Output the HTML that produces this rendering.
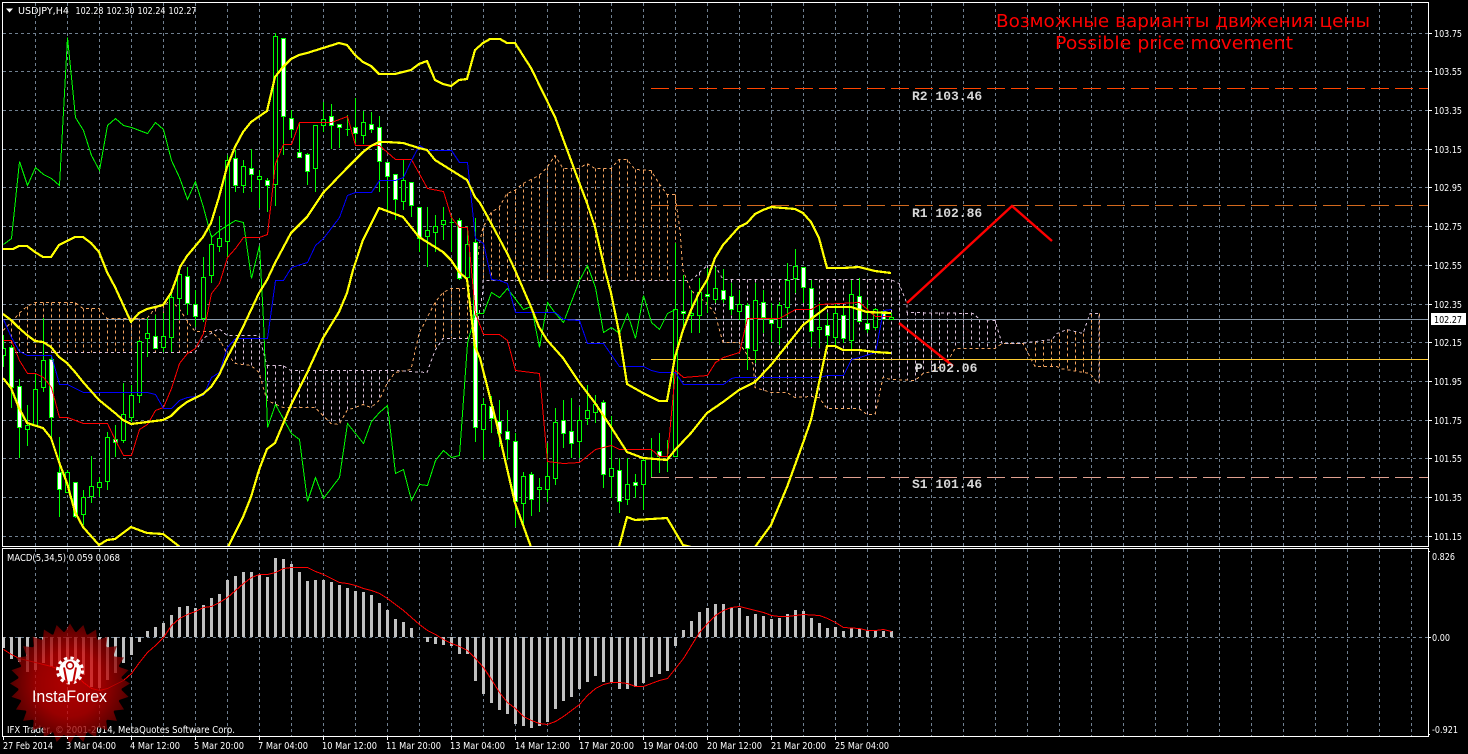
<!DOCTYPE html>
<html>
<head>
<meta charset="utf-8">
<title>USDJPY,H4</title>
<style>
html,body{margin:0;padding:0;background:#000;width:1468px;height:754px;overflow:hidden}
svg{display:block}
.t{font-family:"DejaVu Sans","Liberation Sans",sans-serif;font-size:9.8px;fill:#fff}
.m{font-family:"Liberation Mono",monospace;font-size:13px;font-weight:bold;fill:#d8d8d8}
.l{fill:none;shape-rendering:crispEdges}
</style>
</head>
<body>
<svg xmlns="http://www.w3.org/2000/svg" width="1468" height="754" viewBox="0 0 1468 754">
<defs>
<clipPath id="mc"><rect x="3" y="3" width="1425" height="543"/></clipPath>
<clipPath id="sc"><rect x="3" y="549" width="1425" height="187"/></clipPath>
<radialGradient id="rg" gradientUnits="userSpaceOnUse" cx="0" cy="0" r="60"><stop offset="0" stop-color="#e80000"/><stop offset=".55" stop-color="#c80000"/><stop offset="1" stop-color="#700000"/></radialGradient>
</defs>
<rect width="1468" height="754" fill="#000"/>

<!-- grid -->
<path class="l" stroke="#708090" stroke-dasharray="3 3" d="M35.5 3V736M67.5 3V736M99.5 3V736M131.5 3V736M163.5 3V736M195.5 3V736M227.5 3V736M259.5 3V736M291.5 3V736M323.5 3V736M355.5 3V736M387.5 3V736M419.5 3V736M451.5 3V736M483.5 3V736M515.5 3V736M547.5 3V736M579.5 3V736M611.5 3V736M643.5 3V736M675.5 3V736M707.5 3V736M739.5 3V736M771.5 3V736M803.5 3V736M835.5 3V736M867.5 3V736M899.5 3V736M931.5 3V736M963.5 3V736M995.5 3V736M1027.5 3V736M1059.5 3V736M1091.5 3V736M1123.5 3V736M1155.5 3V736M1187.5 3V736M1219.5 3V736M1251.5 3V736M1283.5 3V736M1315.5 3V736M1347.5 3V736M1379.5 3V736M1411.5 3V736"/>
<path class="l" stroke="#708090" stroke-dasharray="3 3" d="M3 33.5H1428M3 71.5H1428M3 110.5H1428M3 149.5H1428M3 187.5H1428M3 226.5H1428M3 265.5H1428M3 304.5H1428M3 342.5H1428M3 381.5H1428M3 420.5H1428M3 458.5H1428M3 497.5H1428M3 536.5H1428M3 637.5H1428"/>

<g clip-path="url(#mc)">
<!-- cloud hatching -->
<g transform="translate(0,.5)" class="l" stroke-dasharray="3 3">
<path stroke="#f4a460" d="M11.5 322V352M19.5 313V352M27.5 306V352M35.5 302V352M43.5 302V352M51.5 302V352M59.5 302V352M67.5 302V352M75.5 302V352M83.5 308V352M91.5 308V352M99.5 308V352M107.5 318V352M115.5 318V352M123.5 318V352M131.5 318V352M139.5 318V352M147.5 318V352M155.5 308V352M163.5 305V352M171.5 300V352M179.5 308V352M187.5 320V352M435.5 302V350M443.5 292V338M451.5 288V338M459.5 288V338M467.5 288V338M475.5 280V338M483.5 227V280M491.5 212V280M499.5 207V280M507.5 193V280M515.5 190V280M523.5 183V280M531.5 179V280M539.5 175V280M547.5 167V280M555.5 155V280M563.5 168V280M571.5 168V280M579.5 168V280M587.5 163V280M595.5 168V280M603.5 168V280M611.5 168V280M619.5 159V280M627.5 159V280M635.5 169V280M643.5 170V280M651.5 170V280M659.5 183V280M667.5 194V280M675.5 194V280M1035.5 341V366M1043.5 340V366M1051.5 339V366M1059.5 333V368M1067.5 329V370M1075.5 331V371M1083.5 333V373M1091.5 313V373M1099.5 313V383"/>
<path stroke="#d8bfd8" d="M235.5 338V363M243.5 338V364M251.5 338V365M259.5 338V372M267.5 365V400M275.5 365V405M283.5 365V407M291.5 370V407M299.5 370V407M307.5 370V407M315.5 370V407M323.5 370V415M331.5 370V423M339.5 370V424M347.5 370V410M355.5 370V407M363.5 370V404M371.5 370V407M379.5 370V400M387.5 370V383M699.5 272V300M707.5 265V303M715.5 265V313M723.5 279V342M731.5 279V342M739.5 279V342M747.5 279V360M755.5 279V387M763.5 279V390M771.5 279V392M779.5 279V392M787.5 279V392M795.5 279V397M803.5 279V396M811.5 279V396M819.5 279V397M827.5 279V408M835.5 279V408M843.5 279V408M851.5 279V408M859.5 279V408M867.5 279V414M875.5 279V414M883.5 279V377M891.5 279V380M899.5 283V380M907.5 312V380M915.5 312V380M923.5 312V373M931.5 312V371M939.5 312V366M947.5 312V362M955.5 312V348M963.5 312V348M971.5 312V348M979.5 319V348M987.5 319V348M995.5 320V348"/>
<polyline fill="none" stroke="#f4a460" stroke-dasharray="3 3" points="3,330 11,322 19,313 27,306 35,302 75,302 83,308 99,308 107,318 147,318 155,308 163,305 171,300 179,308 187,320 195,331 211,331 219,338 227,353 235,363 251,365 259,372 267,400 283,407 315,407 323,415 331,423 339,424 347,410 355,407 363,404 371,407 379,400 387,383 395,372 411,369 419,333 435,302 443,292 451,288 467,288 475,280 480,240 483,227 491,212 499,207 507,193 515,190 523,183 531,179 539,175 547,167 555,155 563,168 579,168 587,163 595,168 611,168 619,159 627,159 635,169 651,170 659,183 667,194 675,194 680,230 683,270 691,290 707,303 715,313 723,342 739,342 753,363 755,387 771,392 787,392 795,397 811,396 819,397 827,408 859,408 867,414 875,414 883,377 891,379 915,380 923,373 932,371 947,362 955,348 995,348 1002,343 1023,343 1035,366 1057,366 1060,368 1090,373 1098,383"/>
<polyline fill="none" stroke="#d8bfd8" stroke-dasharray="3 3" points="3,352 195,352 203,338 219,328 227,335 259,335 267,365 283,365 291,370 395,370 427,372 435,350 443,338 475,338 483,290 483,280 675,280 691,280 707,265 715,265 723,279 891,279 899,283 907,303 907,312 973,313 980,319 995,320 1002,343 1023,343 1027,342 1052,339 1057,333 1067,329 1083,333 1090,313 1099,313 1099,383"/>
</g>

<!-- price levels -->
<path class="l" stroke="#ff4500" stroke-dasharray="18 6" d="M651 88.5H1428"/>
<path class="l" stroke="#d2691e" stroke-dasharray="18 6" d="M651 205.5H1428"/>
<path class="l" stroke="#e0a090" stroke-dasharray="18 6" d="M651 477.5H1428"/>
<path class="l" stroke="#ffcc33" d="M651 359.5H1428"/>
<path class="l" stroke="#8a9aaa" d="M3 319.5H1428"/>

<!-- candles -->
<path class="l" stroke="#00ff00" d="M3.5 335V367M11.5 345V408M19.5 379V458M27.5 405V446M35.5 373V427M43.5 318V392M51.5 356V437M59.5 437V517M67.5 470V492M75.5 482V518M83.5 490V525M91.5 456V503M99.5 477V497M107.5 432V490M115.5 425V457M123.5 383V443M131.5 385V422M139.5 340V403M147.5 318V357M155.5 315V349M163.5 313V352M171.5 293V352M179.5 267V320M187.5 267V315M195.5 290V327M203.5 257V322M211.5 235V283M219.5 216V252M227.5 155V257M235.5 150V192M243.5 160V193M251.5 149V192M259.5 170V208M267.5 178V212M275.5 33V206M283.5 38V155M291.5 110V138M299.5 123V157M307.5 153V185M315.5 125V192M323.5 102V132M331.5 104V149M339.5 125V148M347.5 115V136M355.5 98V143M363.5 111V144M371.5 112V133M379.5 116V192M387.5 162V210M395.5 174V220M403.5 160V210M411.5 182V217M419.5 207V252M427.5 207V267M435.5 215V252M443.5 207V240M451.5 215V252M459.5 218V280M467.5 226V290M475.5 218V442M483.5 398V460M491.5 396V433M499.5 400V447M507.5 410V460M515.5 433V527M523.5 472V527M531.5 472V516M539.5 478V512M547.5 443V502M555.5 408V485M563.5 400V448M571.5 398V458M579.5 407V458M587.5 385V425M595.5 395V423M603.5 400V488M611.5 416V498M619.5 458V513M627.5 458V505M635.5 474V498M643.5 458V510M651.5 438V477M659.5 433V473M667.5 440V472M675.5 243V457M683.5 275V327M691.5 290V333M699.5 278V333M707.5 268V313M715.5 267V303M723.5 269V303M731.5 283V315M739.5 290V320M747.5 303V370M755.5 283V363M763.5 290V333M771.5 303V342M779.5 302V345M787.5 263V317M795.5 249V293M803.5 267V303M811.5 280V347M819.5 302V348M827.5 313V347M835.5 303V345M843.5 308V343M851.5 280V350M859.5 278V323M867.5 300V333M875.5 308V330M883.5 310V320M891.5 313V320M345.5 129.5H350M449.5 222.5H454M649.5 458.5H654M665.5 456.5H670"/>
<path shape-rendering="crispEdges" stroke="#00ff00" fill="#000" d="M1.5 348.5h4V355.5h-4zM25.5 425.5h4V429.5h-4zM33.5 389.5h4V425.5h-4zM41.5 360.5h4V387.5h-4zM65.5 472.5h4V492.5h-4zM81.5 497.5h4V514.5h-4zM89.5 486.5h4V496.5h-4zM97.5 482.5h4V487.5h-4zM105.5 437.5h4V481.5h-4zM121.5 414.5h4V440.5h-4zM129.5 395.5h4V417.5h-4zM137.5 341.5h4V395.5h-4zM145.5 333.5h4V338.5h-4zM161.5 336.5h4V347.5h-4zM169.5 297.5h4V337.5h-4zM177.5 274.5h4V298.5h-4zM201.5 277.5h4V318.5h-4zM209.5 244.5h4V275.5h-4zM217.5 238.5h4V246.5h-4zM225.5 160.5h4V241.5h-4zM241.5 166.5h4V185.5h-4zM257.5 176.5h4V179.5h-4zM273.5 36.5h4V184.5h-4zM313.5 125.5h4V168.5h-4zM321.5 119.5h4V125.5h-4zM361.5 122.5h4V135.5h-4zM401.5 180.5h4V201.5h-4zM425.5 230.5h4V236.5h-4zM433.5 226.5h4V232.5h-4zM441.5 220.5h4V224.5h-4zM465.5 244.5h4V277.5h-4zM481.5 404.5h4V429.5h-4zM521.5 476.5h4V503.5h-4zM537.5 487.5h4V489.5h-4zM545.5 476.5h4V489.5h-4zM553.5 422.5h4V478.5h-4zM577.5 420.5h4V441.5h-4zM585.5 410.5h4V418.5h-4zM593.5 404.5h4V412.5h-4zM609.5 468.5h4V476.5h-4zM625.5 484.5h4V499.5h-4zM641.5 460.5h4V484.5h-4zM673.5 309.5h4V456.5h-4zM689.5 313.5h4V315.5h-4zM697.5 292.5h4V315.5h-4zM713.5 288.5h4V299.5h-4zM737.5 304.5h4V311.5h-4zM753.5 300.5h4V350.5h-4zM777.5 305.5h4V327.5h-4zM785.5 280.5h4V307.5h-4zM793.5 266.5h4V278.5h-4zM817.5 327.5h4V329.5h-4zM833.5 313.5h4V337.5h-4zM849.5 294.5h4V340.5h-4zM873.5 309.5h4V327.5h-4zM889.5 317.5h4V319.5h-4z"/>
<path shape-rendering="crispEdges" stroke="#00ff00" fill="#fff" d="M9.5 347.5h4V387.5h-4zM17.5 386.5h4V427.5h-4zM49.5 359.5h4V417.5h-4zM57.5 472.5h4V489.5h-4zM73.5 482.5h4V516.5h-4zM113.5 439.5h4V442.5h-4zM153.5 336.5h4V348.5h-4zM185.5 276.5h4V303.5h-4zM193.5 304.5h4V316.5h-4zM233.5 158.5h4V185.5h-4zM249.5 168.5h4V174.5h-4zM265.5 180.5h4V185.5h-4zM281.5 38.5h4V116.5h-4zM289.5 118.5h4V129.5h-4zM297.5 152.5h4V157.5h-4zM305.5 154.5h4V171.5h-4zM329.5 116.5h4V125.5h-4zM337.5 124.5h4V127.5h-4zM353.5 127.5h4V133.5h-4zM369.5 124.5h4V129.5h-4zM377.5 127.5h4V161.5h-4zM385.5 162.5h4V176.5h-4zM393.5 174.5h4V199.5h-4zM409.5 182.5h4V205.5h-4zM417.5 207.5h4V238.5h-4zM457.5 220.5h4V278.5h-4zM473.5 242.5h4V427.5h-4zM489.5 406.5h4V418.5h-4zM497.5 421.5h4V433.5h-4zM505.5 431.5h4V439.5h-4zM513.5 441.5h4V501.5h-4zM529.5 474.5h4V499.5h-4zM561.5 420.5h4V433.5h-4zM569.5 431.5h4V443.5h-4zM601.5 402.5h4V474.5h-4zM617.5 470.5h4V501.5h-4zM633.5 482.5h4V485.5h-4zM657.5 451.5h4V456.5h-4zM681.5 311.5h4V313.5h-4zM705.5 294.5h4V296.5h-4zM721.5 290.5h4V299.5h-4zM729.5 296.5h4V309.5h-4zM745.5 305.5h4V348.5h-4zM761.5 302.5h4V317.5h-4zM769.5 319.5h4V323.5h-4zM801.5 267.5h4V287.5h-4zM809.5 288.5h4V331.5h-4zM825.5 325.5h4V335.5h-4zM841.5 315.5h4V338.5h-4zM857.5 296.5h4V321.5h-4zM865.5 323.5h4V329.5h-4zM881.5 311.5h4V319.5h-4z"/>

<!-- ichimoku lines -->
<g transform="translate(.5,.5)" fill="none" shape-rendering="crispEdges">
<polyline stroke="#00ff00" points="3,244 11,238 19,161 27,185 35,167 43,174 51,178 59,185 67,37 75,117 83,130 91,155 99,170 107,125 115,118 123,125 131,127 147,133 155,122 163,129 171,160 179,177 187,199 195,181 203,207 211,237 219,230 235,220 243,222 251,278 259,245 263,320 267,427 275,404 291,433 299,439 307,501 315,477 323,498 339,477 347,423 363,443 371,421 379,412 387,405 395,473 403,469 411,500 419,484 427,485 435,460 443,450 451,457 459,455 467,343 475,313 483,313 491,292 499,297 507,288 523,309 531,306 539,347 547,302 555,313 563,322 579,280 587,265 595,287 603,332 611,327 619,333 627,313 635,338 643,295 651,322 659,329 667,313 675,309"/>
<polyline stroke="#ff0000" points="3,340 11,340 19,360 27,373 35,373 43,377 51,387 59,417 67,417 83,423 107,423 115,440 123,455 131,455 139,429 147,424 155,410 163,407 171,388 179,363 187,353 195,348 203,333 211,293 219,283 227,257 235,248 243,237 259,237 267,234 272,190 275,163 283,144 291,144 299,122 331,122 347,116 355,145 379,145 395,159 411,159 427,188 443,191 451,217 459,227 467,227 471,270 475,313 483,334 499,334 507,340 515,370 539,373 547,461 563,463 579,462 595,449 611,445 619,449 651,449 659,456 667,456 675,370 683,377 707,375 715,362 723,357 739,352 747,318 779,318 795,309 811,309 819,304 859,302 875,316 891,316"/>
<polyline stroke="#0000ff" points="3,319 11,337 19,351 27,355 51,355 59,384 67,384 83,392 147,392 155,394 163,408 171,408 179,400 187,397 203,395 211,377 219,372 227,347 235,338 267,338 275,280 283,280 291,267 307,262 315,245 323,238 339,217 347,195 355,192 371,192 379,180 395,180 403,177 411,160 419,145 427,150 451,150 459,162 467,162 475,238 483,243 491,279 499,280 507,283 515,312 555,312 563,319 579,320 587,343 603,343 619,366 643,366 651,370 659,372 675,372 683,384 723,384 731,378 735,377 819,377 827,375 843,375 851,359 859,357 875,352 883,310 891,309"/>
</g>

<!-- bollinger -->
<g fill="none" stroke="#ffff00" stroke-width="2.2" stroke-linejoin="round" shape-rendering="crispEdges">
<polyline points="3,249 13,249 19,246 27,246 35,252 43,257 51,257 59,245 67,241 75,237 83,237 91,243 99,252 107,272 115,287 131,322 139,313 147,309 163,305 171,293 177,277 180,267 187,256 203,237 211,223 219,197 227,167 235,147 243,132 251,122 267,111 275,77 283,67 291,59 299,55 307,53 323,48 339,43 347,45 355,55 363,62 371,66 379,74 395,74 411,70 419,64 427,61 435,80 443,84 451,86 459,80 467,79 475,50 483,43 490,39 500,39 507,43 515,43 531,68 555,117 579,182 587,203 595,227 605,270 611,293 619,332 627,384 643,393 659,401 667,401 675,357 683,330 691,310 699,293 707,280 715,258 723,245 739,227 747,223 755,214 763,210 771,207 795,209 803,213 811,222 819,238 827,268 843,268 859,267 875,271 891,273"/>
<polyline points="3,314 11,320 19,328 27,335 35,341 43,342 51,347 59,357 67,363 75,372 83,382 99,400 115,413 123,420 131,424 139,423 147,422 163,420 171,416 179,408 187,402 195,398 203,394 211,387 219,375 227,358 235,343 243,327 251,310 259,293 267,280 275,263 283,248 291,233 307,217 323,193 347,168 363,152 371,146 379,142 387,142 403,143 419,148 427,150 435,160 451,170 467,180 475,197 480,203 491,223 499,238 507,253 515,270 531,307 539,327 547,340 563,358 579,382 595,403 611,427 627,452 643,458 667,460 675,450 691,433 707,413 723,402 739,390 755,382 771,365 787,345 803,325 819,313 827,307 851,307 867,312 891,313"/>
<polyline points="3,378 11,388 19,408 27,423 43,428 51,438 59,462 67,483 75,512 83,527 99,545 107,540 115,539 131,527 147,533 163,534 171,540 180,547"/>
<polyline points="228,547 243,517 251,497 259,470 267,449 275,443 291,405 307,373 323,338 339,312 347,293 353,270 363,240 379,208 403,217 419,237 427,242 443,252 451,260 459,272 467,279 475,347 480,358 497,425 515,503 531,547"/>
<polyline points="619,547 627,517 635,520 667,518 683,545 691,547"/>
<polyline points="755,547 771,525 787,487 803,443 811,420 819,383 827,346 835,346 843,350 859,350 875,352 891,353"/>
</g>

<!-- forecast arrows -->
<polyline fill="none" stroke="#ff0000" stroke-width="2.4" points="907,303 1012,206 1052,241"/>
<line x1="899" y1="323" x2="953" y2="366" stroke="#ff0000" stroke-width="2.4"/>
</g>

<!-- macd -->
<g clip-path="url(#sc)">
<path class="l" stroke="#c0c0c0" stroke-width="3" d="M3.5 637V648M11.5 637V659M19.5 637V662M27.5 637V672M35.5 637V670M43.5 637V663M51.5 637V667M59.5 637V664M67.5 637V683M75.5 637V683M83.5 637V675M91.5 637V687M99.5 637V688M107.5 637V680M115.5 637V673M123.5 637V663M131.5 637V655M139.5 637V642M147.5 637V631M155.5 637V627M163.5 637V623M171.5 637V615M179.5 637V607M187.5 637V606M195.5 637V608M203.5 637V605M211.5 637V598M219.5 637V594M227.5 637V580M235.5 637V576M243.5 637V572M251.5 637V572M259.5 637V575M267.5 637V577M275.5 637V558M283.5 637V559M291.5 637V564M299.5 637V572M307.5 637V581M315.5 637V580M323.5 637V580M331.5 637V582M339.5 637V585M347.5 637V588M355.5 637V591M363.5 637V592M371.5 637V595M379.5 637V603M387.5 637V610M395.5 637V619M403.5 637V622M411.5 637V628M427.5 637V642M435.5 637V644M443.5 637V645M451.5 637V646M459.5 637V654M467.5 637V654M475.5 637V681M483.5 637V694M491.5 637V703M499.5 637V710M507.5 637V714M515.5 637V724M523.5 637V726M531.5 637V728M539.5 637V726M547.5 637V722M555.5 637V709M563.5 637V701M571.5 637V697M579.5 637V689M587.5 637V682M595.5 637V676M603.5 637V682M611.5 637V682M619.5 637V689M627.5 637V689M635.5 637V687M643.5 637V683M651.5 637V677M659.5 637V674M667.5 637V671M675.5 637V646M683.5 637V630M691.5 637V621M699.5 637V612M707.5 637V608M715.5 637V604M723.5 637V604M731.5 637V608M739.5 637V608M747.5 637V616M755.5 637V614M763.5 637V616M771.5 637V619M779.5 637V618M787.5 637V614M795.5 637V610M803.5 637V611M811.5 637V618M819.5 637V623M827.5 637V628M835.5 637V627M843.5 637V631M851.5 637V628M859.5 637V629M867.5 637V631M875.5 637V631M883.5 637V631M891.5 637V631"/>
<polyline fill="none" stroke="#ff0000" shape-rendering="crispEdges" transform="translate(.5,.5)" points="3,649 11,654 19,658 35,662 51,666 59,669 75,673 83,682 91,688 99,690 107,688 115,684 123,680 131,673 139,662 147,652 155,645 163,637 171,625 179,618 187,614 195,611 203,607 211,606 219,602 227,597 235,590 243,583 251,577 259,574 267,574 275,572 283,568 291,567 307,567 315,571 323,574 331,578 339,582 347,583 355,585 363,588 371,590 379,593 387,598 395,604 403,610 411,617 419,624 427,630 435,634 443,639 451,643 459,646 467,650 475,658 483,667 491,679 499,692 507,702 515,708 523,716 531,720 539,723 547,724 555,721 563,716 571,710 579,704 587,695 595,688 603,684 611,682 619,682 627,683 635,686 643,686 651,683 659,680 667,678 675,668 683,658 691,645 699,632 707,623 715,615 723,610 731,607 739,606 747,608 755,610 763,612 771,615 779,616 787,616 795,615 803,614 819,615 827,618 835,622 843,627 859,628 867,630 875,630 883,629 891,631"/>
</g>

<text class="t" x="7" y="561" textLength="113" lengthAdjust="spacingAndGlyphs">MACD(5,34,5) 0.059 0.068</text>
<text class="t" x="7" y="733" textLength="228" lengthAdjust="spacingAndGlyphs">IFX Trader, © 2001-2014, MetaQuotes Software Corp.</text>

<!-- logo star -->
<g opacity=".76">
<g transform="translate(70,683.5)" fill="url(#rg)">
<circle r="52"/>
<path d="M-60 0L0 -37L60 0L0 37Z"/>
<path d="M-60 0L0 -37L60 0L0 37Z" transform="rotate(12.857)"/>
<path d="M-60 0L0 -37L60 0L0 37Z" transform="rotate(25.714)"/>
<path d="M-60 0L0 -37L60 0L0 37Z" transform="rotate(38.571)"/>
<path d="M-60 0L0 -37L60 0L0 37Z" transform="rotate(51.428)"/>
<path d="M-60 0L0 -37L60 0L0 37Z" transform="rotate(64.285)"/>
<path d="M-60 0L0 -37L60 0L0 37Z" transform="rotate(77.142)"/>
<path d="M-60 0L0 -37L60 0L0 37Z" transform="rotate(90)"/>
<path d="M-60 0L0 -37L60 0L0 37Z" transform="rotate(102.857)"/>
<path d="M-60 0L0 -37L60 0L0 37Z" transform="rotate(115.714)"/>
<path d="M-60 0L0 -37L60 0L0 37Z" transform="rotate(128.571)"/>
<path d="M-60 0L0 -37L60 0L0 37Z" transform="rotate(141.428)"/>
<path d="M-60 0L0 -37L60 0L0 37Z" transform="rotate(154.285)"/>
<path d="M-60 0L0 -37L60 0L0 37Z" transform="rotate(167.142)"/>
</g>
</g>
<!-- gear -->
<g transform="translate(70,670.5)">
<circle r="12.5" fill="none" stroke="#fff" stroke-width="3" stroke-dasharray="3.3 3.25"/>
<circle r="11" fill="#fff"/>
<circle cy="-5" r="3.4" fill="none" stroke="#b00000" stroke-width="1.6"/>
<path d="M-6 -3L-3 13M6 -3L3 13" stroke="#c00000" stroke-width="2" fill="none"/>
</g>
<text x="32" y="702" font-family="'Liberation Sans',sans-serif" font-size="16.5" fill="#fff" textLength="75" lengthAdjust="spacingAndGlyphs">InstaForex</text>

<!-- frames -->
<rect x="2.5" y="2.5" width="1426" height="544" fill="none" stroke="#fff" shape-rendering="crispEdges"/>
<rect x="2.5" y="548.5" width="1426" height="188" fill="none" stroke="#fff" shape-rendering="crispEdges"/>

<!-- ticks -->
<path class="l" stroke="#fff" d="M1429 33.5h3M1429 71.5h3M1429 110.5h3M1429 149.5h3M1429 187.5h3M1429 226.5h3M1429 265.5h3M1429 304.5h3M1429 342.5h3M1429 381.5h3M1429 420.5h3M1429 458.5h3M1429 497.5h3M1429 536.5h3M1429 551.5h1M1429 637.5h2M1429 734.5h1M3.5 736v4M67.5 736v3M131.5 736v4M195.5 736v4M259.5 736v4M323.5 736v4M387.5 736v4M451.5 736v4M515.5 736v4M579.5 736v4M643.5 736v4M707.5 736v4M771.5 736v4M835.5 736v4"/>

<!-- header -->
<path d="M6 8.5h7l-3.5 4z" fill="#fff"/>
<text class="t" x="18" y="14" textLength="51" lengthAdjust="spacingAndGlyphs">USDJPY,H4</text>
<text class="t" x="75.5" y="14" textLength="28" lengthAdjust="spacingAndGlyphs">102.28</text>
<text class="t" x="106.5" y="14" textLength="28" lengthAdjust="spacingAndGlyphs">102.30</text>
<text class="t" x="137.5" y="14" textLength="28" lengthAdjust="spacingAndGlyphs">102.24</text>
<text class="t" x="168.5" y="14" textLength="28" lengthAdjust="spacingAndGlyphs">102.27</text>

<!-- pivot labels -->
<text class="m" x="912" y="100">R2 103.46</text>
<text class="m" x="912" y="217">R1 102.86</text>
<text class="m" x="915" y="372">P 102.06</text>
<text class="m" x="912" y="488">S1 101.46</text>

<!-- title -->
<text x="996" y="27" font-family="'DejaVu Sans',sans-serif" font-size="18" fill="#ff0000" textLength="374" lengthAdjust="spacingAndGlyphs">Возможные варианты движения цены</text>
<text x="1055" y="49" font-family="'DejaVu Sans',sans-serif" font-size="18" fill="#ff0000" textLength="238" lengthAdjust="spacingAndGlyphs">Possible price movement</text>

<!-- price axis -->
<g class="t">
<text x="1434" y="37" textLength="28" lengthAdjust="spacingAndGlyphs">103.75</text>
<text x="1434" y="75" textLength="28" lengthAdjust="spacingAndGlyphs">103.55</text>
<text x="1434" y="114" textLength="28" lengthAdjust="spacingAndGlyphs">103.35</text>
<text x="1434" y="153" textLength="28" lengthAdjust="spacingAndGlyphs">103.15</text>
<text x="1434" y="191" textLength="28" lengthAdjust="spacingAndGlyphs">102.95</text>
<text x="1434" y="230" textLength="28" lengthAdjust="spacingAndGlyphs">102.75</text>
<text x="1434" y="269" textLength="28" lengthAdjust="spacingAndGlyphs">102.55</text>
<text x="1434" y="308" textLength="28" lengthAdjust="spacingAndGlyphs">102.35</text>
<text x="1434" y="346" textLength="28" lengthAdjust="spacingAndGlyphs">102.15</text>
<text x="1434" y="385" textLength="28" lengthAdjust="spacingAndGlyphs">101.95</text>
<text x="1434" y="424" textLength="28" lengthAdjust="spacingAndGlyphs">101.75</text>
<text x="1434" y="462" textLength="28" lengthAdjust="spacingAndGlyphs">101.55</text>
<text x="1434" y="501" textLength="28" lengthAdjust="spacingAndGlyphs">101.35</text>
<text x="1434" y="540" textLength="28" lengthAdjust="spacingAndGlyphs">101.15</text>
<text x="1432" y="560" textLength="23" lengthAdjust="spacingAndGlyphs">0.826</text>
<text x="1432" y="641" textLength="18" lengthAdjust="spacingAndGlyphs">0.00</text>
<text x="1432" y="733" textLength="26" lengthAdjust="spacingAndGlyphs">-0.921</text>
</g>
<rect x="1431" y="313" width="35" height="12" fill="#fff"/>
<text x="1434" y="323" font-family="'DejaVu Sans',sans-serif" font-size="9.8" fill="#000" textLength="28" lengthAdjust="spacingAndGlyphs">102.27</text>

<!-- time axis -->
<text class="t" x="3" y="749" textLength="50" lengthAdjust="spacingAndGlyphs">27 Feb 2014</text>
<text class="t" x="66" y="749" textLength="50" lengthAdjust="spacingAndGlyphs">3 Mar 04:00</text>
<text class="t" x="130" y="749" textLength="50" lengthAdjust="spacingAndGlyphs">4 Mar 12:00</text>
<text class="t" x="194" y="749" textLength="50" lengthAdjust="spacingAndGlyphs">5 Mar 20:00</text>
<text class="t" x="258" y="749" textLength="50" lengthAdjust="spacingAndGlyphs">7 Mar 04:00</text>
<text class="t" x="322" y="749" textLength="55" lengthAdjust="spacingAndGlyphs">10 Mar 12:00</text>
<text class="t" x="386" y="749" textLength="55" lengthAdjust="spacingAndGlyphs">11 Mar 20:00</text>
<text class="t" x="450" y="749" textLength="55" lengthAdjust="spacingAndGlyphs">13 Mar 04:00</text>
<text class="t" x="515" y="749" textLength="55" lengthAdjust="spacingAndGlyphs">14 Mar 12:00</text>
<text class="t" x="579" y="749" textLength="55" lengthAdjust="spacingAndGlyphs">17 Mar 20:00</text>
<text class="t" x="643" y="749" textLength="55" lengthAdjust="spacingAndGlyphs">19 Mar 04:00</text>
<text class="t" x="707" y="749" textLength="55" lengthAdjust="spacingAndGlyphs">20 Mar 12:00</text>
<text class="t" x="771" y="749" textLength="55" lengthAdjust="spacingAndGlyphs">21 Mar 20:00</text>
<text class="t" x="835" y="749" textLength="54" lengthAdjust="spacingAndGlyphs">25 Mar 04:00</text>
</svg>
</body>
</html>
